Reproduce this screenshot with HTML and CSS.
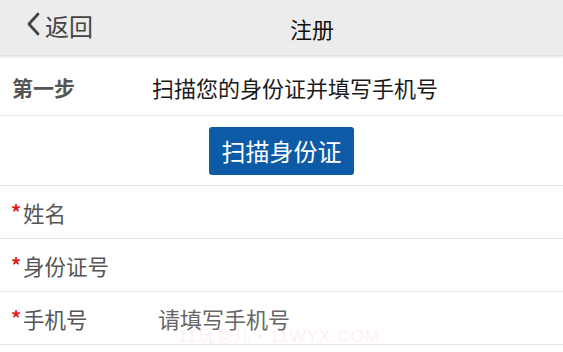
FILE: index.html
```html
<!DOCTYPE html>
<html lang="zh">
<head>
<meta charset="utf-8">
<link rel="stylesheet" href="styles.css">
</head>
<body>
<header class="topbar">
  <div class="back">
    <svg class="chev" width="15" height="26" viewBox="0 0 15 26"><path d="M12 3 L3 13 L12 23" fill="none" stroke="#444" stroke-width="2.8" stroke-linecap="round" stroke-linejoin="round"/></svg>
    <span>返回</span>
  </div>
  <div class="title">注册</div>
</header>
<main class="form">
  <div class="row step">
    <span class="step-label">第一步</span>
    <span class="step-text">扫描您的身份证并填写手机号</span>
  </div>
  <div class="row btn-row">
    <button class="scan">扫描身份证</button>
  </div>
  <div class="row field"><span class="req">*</span><span class="label">姓名</span></div>
  <div class="row field"><span class="req">*</span><span class="label">身份证号</span></div>
  <div class="row field phone"><span class="req">*</span><span class="label">手机号</span><span class="ph">请填写手机号</span>
    <span class="wm">11玩意儿 • 11WYX.COM</span>
  </div>
</main>
</body>
</html>
```
FILE: styles.css
```css
* { box-sizing: border-box; }
html, body { margin: 0; padding: 0; background: #fff; }
body {
  font-family: "Noto Sans CJK SC", "Noto Sans", sans-serif;
  width: 563px;
  height: 352px;
  overflow: hidden;
}
.topbar {
  height: 56px;
  background: #ececec;
  display: flex;
  align-items: center;
  box-shadow: 0 1px 2px rgba(0,0,0,0.12);
  border-bottom: 1px solid #e2e2e2;
  position: relative;
}
.back {
  display: flex;
  align-items: center;
  padding-left: 26px;
  width: 290px;
  color: #444;
  font-size: 24px;
  line-height: 1;
  margin-top: -4px;
}
.chev { margin-right: 4px; margin-top: -4px; }
.title {
  font-size: 22px;
  color: #111;
  line-height: 1;
}
.form { margin-top: 2px; }
.row {
  display: flex;
  align-items: center;
  border-bottom: 1px solid #e4e4e4;
  position: relative;
}
.step { height: 58px; padding-left: 12px; }
.step-label {
  font-weight: bold;
  color: #555;
  font-size: 21px;
  width: 140px;
}
.step-text { font-size: 22px; color: #1a1a1a; }
.btn-row { height: 70px; justify-content: center; }
.scan {
  width: 145px;
  height: 48px;
  background: #0d5ba7;
  color: #fff;
  border: none;
  border-radius: 3px;
  font-family: inherit;
  font-size: 24px;
  padding: 0;
}
.field { height: 53px; padding-left: 11px; }
.req { color: #e21d1d; font-size: 20px; font-weight: bold; width: 12px; margin-top: -2px; }
.label { font-size: 21.5px; color: #555; width: 135px; }
.ph { font-size: 22px; line-height: 22px; color: #666; }
.wm {
  position: absolute;
  left: 178px;
  top: 37px;
  font-size: 17px;
  line-height: 15px;
  color: rgba(255, 170, 230, 0.22);
  font-family: "Liberation Sans", "Noto Sans CJK SC", sans-serif;
  letter-spacing: 1px;
}
```
